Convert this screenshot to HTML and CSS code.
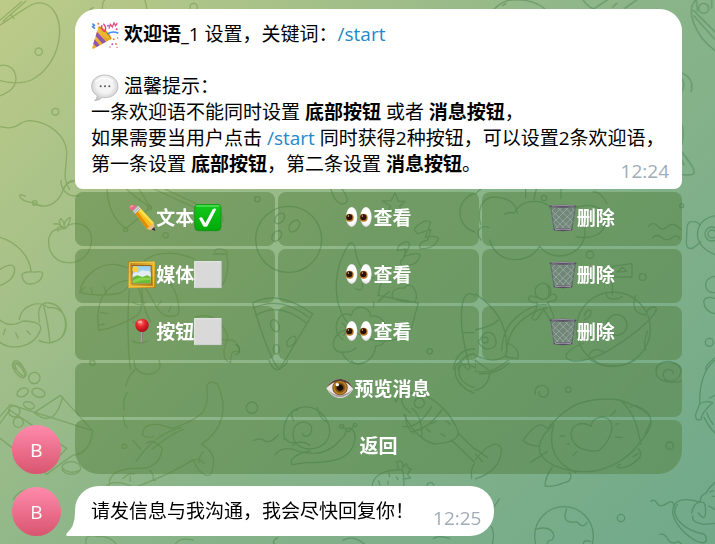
FILE: index.html
```html
<!DOCTYPE html>
<html lang="zh-CN">
<head>
<meta charset="utf-8">
<meta name="viewport" content="width=device-width, initial-scale=1">
<title>欢迎语设置</title>
<link rel="stylesheet" href="styles.css">
</head>
<body>
<svg class="sprite" aria-hidden="true">
  <defs>
    <linearGradient id="gold" x1="0" y1="0" x2="1" y2="1"><stop offset="0" stop-color="#ffd34a"/><stop offset="1" stop-color="#d88b10"/></linearGradient>
    <linearGradient id="frame" x1="0" y1="0" x2="1" y2="1"><stop offset="0" stop-color="#b97a12"/><stop offset=".5" stop-color="#e5b52c"/><stop offset="1" stop-color="#b27a14"/></linearGradient>
    <linearGradient id="sky" x1="0" y1="0" x2="0" y2="1"><stop offset="0" stop-color="#8fcdf0"/><stop offset="1" stop-color="#e4f3f7"/></linearGradient>
    <linearGradient id="lime" x1="0" y1="0" x2="0" y2="1"><stop offset="0" stop-color="#14c91c"/><stop offset="1" stop-color="#02a909"/></linearGradient>
    <radialGradient id="talk" cx=".5" cy=".4" r=".6"><stop offset=".5" stop-color="#f4f4f4"/><stop offset="1" stop-color="#c4c4c4"/></radialGradient>
    <radialGradient id="red" cx=".4" cy=".3" r=".7"><stop offset="0" stop-color="#ff8078"/><stop offset=".45" stop-color="#e3282c"/><stop offset="1" stop-color="#a90c18"/></radialGradient>
    <radialGradient id="white" cx=".5" cy=".45" r=".6"><stop offset=".65" stop-color="#fff"/><stop offset="1" stop-color="#cfc8cf"/></radialGradient>
    <radialGradient id="iris"><stop offset=".35" stop-color="#1c0c06"/><stop offset=".42" stop-color="#5b3108"/><stop offset=".8" stop-color="#c08a25"/><stop offset="1" stop-color="#5a3a12"/></radialGradient>
  </defs>
  <symbol id="party" viewBox="0 0 84 84">
    <path d="M22 14 61 50 8 80Q2 82 4 76Z" fill="url(#gold)"/>
    <path d="M18 29 45 59 35 65 14 42ZM11 52 26 70 17 75 7 65Z" fill="#8d55ad"/>
    <ellipse cx="42" cy="33" rx="8" ry="27" transform="rotate(-45 42 33)" fill="#eeb52d"/>
    <path d="M23 15Q35 19 46 31T60 51" fill="none" stroke="#b77718" stroke-width="3"/>
    <path d="M40 30Q49 16 37 5M40 29Q29 23 33 9" fill="none" stroke="#e73c72" stroke-width="4"/>
    <path d="M49 36Q65 25 82 34M4 5 10 10 5 14 12 20" fill="none" stroke="#468de8" stroke-width="5"/>
    <path d="m54 20 4-13 6 8 5-12 5 8 5-8" fill="none" stroke="#e84a81" stroke-width="4"/>
    <g fill="#ee7d3d"><circle cx="22" cy="5" r="3"/><circle cx="68" cy="52" r="3"/><circle cx="75" cy="66" r="3"/></g>
    <g fill="#a25bc5"><circle cx="51" cy="11" r="3"/><circle cx="64" cy="67" r="3"/><circle cx="80" cy="48" r="2"/></g>
    <g fill="#e74380"><circle cx="77" cy="22" r="3"/><circle cx="78" cy="76" r="2"/><circle cx="57" cy="75" r="2"/></g>
  </symbol>
  <symbol id="speech" viewBox="0 0 84 84">
    <path d="M41 3C18 3 2 17 2 37c0 13 6 22 17 28q-1 10-8 15 14 0 22-10 4 1 9 1c23 0 39-14 39-34S64 3 41 3Z" fill="url(#talk)" stroke="#aaa" stroke-width="2"/>
    <path d="M13 24Q30 3 65 20" fill="none" stroke="#fff" stroke-width="4" opacity=".8"/>
    <g fill="#555"><circle cx="29" cy="37" r="3"/><circle cx="42" cy="37" r="3"/><circle cx="55" cy="37" r="3"/></g>
  </symbol>
  <symbol id="pencil" viewBox="0 0 84 84">
    <path d="m18 23 15-15 44 48 4 24-24-5Z" fill="#ffbf19"/>
    <path d="m18 23 6-6 39 51-6 7Z" fill="#e28c0b"/>
    <path d="m27 14 6-6 44 48-5 5Z" fill="#ffe04a"/>
    <path d="m57 75 8-8 4-1 2-5 6-5 4 24Z" fill="#e8bd88"/><path d="m70 77 9-9 3 13Z" fill="#28334a"/>
    <path d="m12 20 16-16 10 11-16 15Z" fill="#a9afb4"/><path d="m17 23 16-16M20 27 36 12" stroke="#e8edf0" stroke-width="3"/>
    <path d="M13 22 3 13Q3 1 17 2l10 5Z" fill="#e66f7d"/><path d="m6 9 9-4" stroke="#f9a4aa" stroke-width="4"/>
  </symbol>
  <symbol id="check" viewBox="0 0 84 84">
    <rect x="2" y="1" width="79" height="79" rx="12" fill="url(#lime)" stroke="#078b0c" stroke-width="2"/>
    <path d="M8 6h66" stroke="#52df57" stroke-width="4" stroke-linecap="round"/>
    <path d="M15 43q5-5 10-2l9 16L56 16q5-4 11-1L40 67q-7 3-12 0Z" fill="#fff"/>
  </symbol>
  <symbol id="picture" viewBox="0 0 84 84">
    <path d="M1 1h80v80H1Z" fill="url(#frame)"/><path d="M5 5h72v72H5Z" fill="none" stroke="#f0cb4c" stroke-width="3"/>
    <path d="M11 12h60v58H11Z" fill="#976118"/><path d="M14 15h54v52H14Z" fill="url(#sky)"/>
    <circle cx="22" cy="25" r="9" fill="#ffd12f"/><path d="M14 39q9-9 17-3 11-14 21-5 10-5 16 4v17H14Z" fill="#e1edf2"/>
    <path d="m14 49 14-6 15 5 15-5 10 5v19H14Z" fill="#68bd36"/><path d="M14 59q20-13 54-8v6q-25-2-54 10Z" fill="#8ad34d"/>
  </symbol>
  <symbol id="square" viewBox="0 0 84 84"><path d="M1 1h81v80H1Z" fill="#d9d9d9"/><path d="M1 2h81M2 2v79" stroke="#e8e8e8" stroke-width="3"/><path d="M1 80h81V1" fill="none" stroke="#c8c8c8" stroke-width="2"/></symbol>
  <symbol id="pin" viewBox="0 0 84 84">
    <path d="M38 38h8l-2 36-3 3-1-3Z" fill="#81777b"/><path d="M41 38v35" stroke="#c9c2c5" stroke-width="2"/>
    <circle cx="42" cy="22" r="20" fill="url(#red)"/><ellipse cx="36" cy="12" rx="7" ry="4" fill="#ffaca6" opacity=".8"/>
  </symbol>
  <symbol id="eyes" viewBox="0 0 84 84">
    <g fill="url(#white)"><ellipse cx="20" cy="39" rx="17" ry="30"/><ellipse cx="63" cy="39" rx="17" ry="30"/></g>
    <g fill="#b77622"><circle cx="14" cy="41" r="12"/><circle cx="56" cy="41" r="12"/></g>
    <g fill="#2b1108"><circle cx="13" cy="40" r="9"/><circle cx="55" cy="40" r="9"/></g>
    <g fill="#f6d9bb"><circle cx="10" cy="36" r="2"/><circle cx="52" cy="36" r="2"/></g>
  </symbol>
  <symbol id="bin" viewBox="0 0 84 84">
    <path d="M4 6h76l-11 73q-27 4-54 0Z" fill="#73827d" opacity=".75"/>
    <path d="m6 17 61 59M8 34l42 44M10 51l22 27M23 8l52 49M44 8l33 30M65 8l13 13M77 17 17 76M75 34 34 78M72 51 51 78M61 8 12 57M41 8 9 39M22 8 7 22" fill="none" stroke="#a8b1af" stroke-width="2"/>
    <path d="M5 8 15 76M79 8 69 76" stroke="#626d70" stroke-width="3"/>
    <path d="M2 5q40-5 80 0v4q-40 4-80 0ZM14 75q28-4 56 0v4q-28 5-56 0Z" fill="#574d61"/><path d="M8 6q34-3 68 0M18 77q24-3 48 0" fill="none" stroke="#c0bbcc" stroke-width="2"/>
  </symbol>
  <symbol id="eye" viewBox="0 0 84 84">
    <path d="M1 40Q18 10 46 12q24 2 36 31Q63 72 38 69 16 66 1 40Z" fill="#efe6e8"/>
    <path d="M5 42Q20 66 40 67q24 1 40-24Q63 58 41 61 21 60 5 42Z" fill="#aaa0a5"/>
    <circle cx="42" cy="38" r="23" fill="url(#iris)"/><circle cx="34" cy="29" r="5" fill="#fff"/>
    <path d="M1 40Q18 10 46 12q24 2 36 31Q66 19 42 18 19 19 1 40Z" fill="#593d39"/>
  </symbol>
</svg>

<svg class="wallpaper" viewBox="0 0 715 544" preserveAspectRatio="xMinYMin slice" aria-hidden="true">
  <g class="doodle warm">
    <svg width="240" height="190" viewBox="0 0 720 570">
      <path d="M0 75C52 42 86 14 107 10c46-9 73 37 72 88-3 69-43 122-85 142C66 252 24 250 0 242M0 60 65 5M9 64 78 3M32 44l10 12M0 197c26-7 47 11 48 40-1 25-18 38-48 51M0 380c56 14 55-19 91-18 57 4 107 45 109 94 1 49-16 76 9 114M190 570q12-35 43-26"/>
      <circle cx="116" cy="155" r="11"/><circle cx="166" cy="335" r="10"/>
      <path d="M307 28Q307 5 314 0M441 28 435 0M270 28l10-5"/><circle cx="581" cy="21" r="11"/>
    </svg>
    <svg y="180" width="240" height="190" viewBox="0 0 720 570">
      <path d="M76 49C45 31 60 70 98 67c40 27 77 0 89-31 5-22 21-31 34-31M183 0c-1 30 20 52 53 47"/><circle cx="104" cy="69" r="7"/>
      <path d="M183 149c-52-13-53 98 21 99 77 6 98-113 28-117-20-2-32 6-41 16M162 132q16-4 29 13-24-10-17 9M185 145q-12-24-2-29 13 10 8 30M192 146q0-29 19-34-1 19-15 34"/>
      <path d="M0 172c53 15 91 61 93 103 11 5 29-6 35 4-1 25-24 36-46 32-9-3-17-16-16-28 8-8 19-7 27-8M0 268q32-20 42-8c6 18-3 43-42 56"/>
      <path d="M58 419c5-45 62-60 87-36 62-9 73 86 20 101-15 9-40 2-48-3M119 426c-8-35 0-61 29-57 43 5 62 65 37 102M130 374q14 52 20 113M0 420q28 25 69 3c37 1 58 8 52 27-20 58-95 60-121 37M16 447l-6 17M47 459l7 15M80 453l11 10"/>
      <path d="M321 27q4 80 56 119 35-27 74-65-35-20-72-54M451 81 417 27M462 27l153 70M495 27l140 66M639 115q30-34 30 10"/><circle cx="377" cy="149" r="6"/><circle cx="449" cy="83" r="6"/><circle cx="497" cy="166" r="8"/>
      <path d="M239 337c10-54 63-90 113-83l52 16q-8 50-42 69-72 13-123-2ZM413 270c30-60 103-59 169-34M403 274c74-23 144 52 132 129q-38 20-65-20-21-44-67-109M296 451c-10-81 10-145 107-153q40 70 9 109-65 38-116 44M388 330q-10 130 3 240M426 315q-3 60 25 110M398 367q27 15 38 0M398 424q30 15 42 0M396 482q25 15 48 0M240 337l14-15M277 343l-4-20M320 341l-8-21M471 379l14-16M506 395l7-16M295 437l17-5M303 397l20 4"/>
      <path d="M643 215c9-17 42-8 38 13 7 41-3 99-35 91-18-18 3-50-2-76M640 222h39M586 411c55-20 95 33 98 69 25-3 32 18 34 36-24-9-26 8-26 32-30-6-21-48-9-68-31 2-60-30-75-63"/>
      <circle cx="277" cy="549" r="7"/><ellipse cx="56" cy="562" rx="12" ry="23" transform="rotate(-35 56 562)"/>
    </svg>
    <svg y="360" width="240" height="184" viewBox="0 0 720 552">
      <ellipse cx="56" cy="31" rx="11" ry="27" transform="rotate(-38 56 31)"/><ellipse cx="62" cy="29" rx="10" ry="24" transform="rotate(-38 62 29)"/><circle cx="103" cy="54" r="17"/><ellipse cx="68" cy="97" rx="18" ry="12" transform="rotate(-28 68 97)"/><ellipse cx="115" cy="98" rx="20" ry="13" transform="rotate(18 115 98)"/><ellipse cx="87" cy="136" rx="17" ry="10" transform="rotate(20 87 136)"/><circle cx="43" cy="154" r="17"/><circle cx="55" cy="187" r="15"/>
      <path d="M0 170 31 134 278 212Q272 280 218 286L140 343 0 235M0 190 29 150 200 265l-65 70M103 158 181 106 278 212M103 158q62 50 85-48"/><ellipse cx="214" cy="324" rx="28" ry="19"/><path d="M188 325q20 20 50 6M40 418q20-32 48-29"/>
      <path d="M402 0q0 42 47 43 43-12 27-43M410 25q-25 20-32 52M381 98q-15 25-8 51M370 167q1 26 12 37M398 240l23 27"/>
      <path d="M428 224q0-35 50-30l40 11q54-16 88-45 22-30 14-78 6-26 33-9c29 65 25 128-48 180q35 21 36 48-3 58-26 43-22-9-35-45-31 19-63 36-68 31-114 48-44-23-76-11c2-39 45-48 91-47 50 3 66-34 69-59q-29-32-48-16M408 304q61-87 137-101M456 268q55-46 94-60M610 275q-12 10-14 34M580 303q17-14 31 7M427 225q16 12 35 4M274 402q20-9 54-29M391 350v13M369 356q11-15 36-15M449 330q16 17 9 31h9"/><circle cx="373" cy="259" r="7"/><circle cx="277" cy="8" r="8"/>
      <path d="M258 550q-5-31 35-20 30-5 54 20M580 540q-42-9-54 12"/>
    </svg>
  </g>
  <g class="doodle cool">
    <svg x="235" y="180" width="240" height="190" viewBox="0 0 720 570">
      <circle cx="67" cy="58" r="8"/><circle cx="161" cy="178" r="99"/><ellipse cx="134" cy="115" rx="12" ry="18" transform="rotate(40 134 115)"/><ellipse cx="178" cy="138" rx="13" ry="20" transform="rotate(40 178 138)"/><ellipse cx="125" cy="168" rx="12" ry="18" transform="rotate(40 125 168)"/>
      <path d="m276 0 23 56q17 22 31 14 12-7 2-25L306 0M480 39l10 25h20l-16 15 9 22-23-12-24 12 11-23-26-15 27-1Z"/>
      <path d="M360 202q-5-20-19-9c-46 74-68 210 47 281q100 27 141-29l21-76-87-16-34-7 10-41-13-12M360 202q7 70 57 92M416 366v15M430 366q20-22 33-31M362 326q24 13 20-16M538 151q-2-10 29-27 14-4 20 3l-16 45q33-7 39 3-9 32-54 31-9-19 22-26l10-31-40 12ZM487 212q-1-19 27-27 14 1 7 18l-15 27q45-16 49-4-6 31-48 31-22-3 0-24l5-26ZM471 349q1-29 36-24c19-30 49 16 33 41q-59-1-69-17M324 479c-42-28-13-94 25-73 7-36 55-29 58 2 58-7 68 90 15 90-6 65-84 69-100 20-52-6-21-81 27-65M321 429q22 15 5 37M378 460q23-29 41-11M319 516q30 3 44-13"/>
      <path d="M53 369q76-42 180 33l-99 166q-30-24-81-199ZM55 384q84-38 164 27M62 406q72-42 151 22"/><ellipse cx="120" cy="437" rx="12" ry="19" transform="rotate(-25 120 437)"/><ellipse cx="169" cy="484" rx="10" ry="18" transform="rotate(40 169 484)"/><ellipse cx="124" cy="508" rx="9" ry="14"/><path d="M0 494q14 2 14 15T0 524"/><circle cx="584" cy="514" r="8"/><circle cx="735" cy="98" r="60"/>
      <path d="M680 440q-5-100 25-99 15 2 15 10M680 440q7 60 26 127M655 570q8-64 65-63M668 570q12-48 52-48M682 458h38"/>
    </svg>
    <svg x="475" y="180" width="240" height="190" viewBox="0 0 720 570">
      <path d="M0 42 18 27M152 27v26M177 58l7-31M258 56V27M18 180C-5 150 22 132 42 143M88 103q12-9 29-3c24-49 98-44 115-9 17-16 42-16 55-3 60-23 103-11 105 36-6 44-45 54-89 46M17 134c-12-42 3-79 36-83 50 1 68 18 75 50M45 180c14 70 114 79 149 19 47 60 151 20 134-59-3-14-7-16-15-18M354 36q23-5 42 36"/><circle cx="207" cy="54" r="8"/><circle cx="345" cy="224" r="11"/><circle cx="503" cy="291" r="10"/><circle cx="620" cy="77" r="6"/>
      <path d="M520 139q15-16 29 0t30 0 39 10M532 173q15-13 29 0t30 0 24 5M720 107q-51 11-53 58 3 38 53 59M674 135q-4-11-23-10-14 0-15 19l-2 48q3 18 20 12l23-18"/><circle cx="711" cy="162" r="21"/><circle cx="711" cy="162" r="12"/>
      <path d="M720 289c-33 5-30 28-24 41q9 9 24 8M720 355q-28-9-34 9 3 32 34 37M720 534q-29 20-28 36"/><circle cx="703" cy="487" r="12"/>
      <circle cx="204" cy="334" r="24"/><path d="M184 353q-22-13-23 5 5 13 26 9-3 27-16 46 8 17 21-4l14-20 17 27q19 8 10-16l-16-35q28 1 28-14-8-17-26 0 8-20-2-33M412 344v-85l59-8v40h-57M426 276l16-14 13 12ZM393 338q0 20 22 19 18 1 27-8"/>
      <path d="M0 341c72 47 103 111 93 185-30 25-63 12-93 0M0 450q50-10 70-30M80 511q3-71 55-108 45-34 79-28M95 520q0-70 60-110 31-23 61-26M98 489q39 17 30 47l-35-5M15 479q20-37 42-14 20 42-25 42-31-20-17-28"/><circle cx="30" cy="480" r="9"/>
      <circle cx="415" cy="447" r="111"/><circle cx="425" cy="435" r="31"/><path d="M326 489C213 533 301 578 415 502c77-47 154-118 121-121q-11-1-22 15M481 347q-16 53 31 58M518 453q-14 32-6 58M342 525q14-27 44-9M367 432q-2 27 20 45M328 408q6-22 20-16 2 19-20 27M0 570v-30l40 30"/>
      <path d="M542 570q4-25 38-24 37 5 38 24"/>
    </svg>
    <svg x="235" y="360" width="240" height="184" viewBox="0 0 720 552">
      <circle cx="51" cy="143" r="17"/><path d="M102 0q16 42 37 23 17-9 19-23M349 0q10 18 35 9"/>
      <path d="M56 242q19-11 33 0t41-17M120 284q20-24 54-16 92 35 144-31 16-11 16-30c13-10 29 8 26 29-6 57-54 72-147 72l-42 6c-14-17 23-37 55-41M322 199l19 17 16-18"/><circle cx="360" cy="195" r="5"/><circle cx="320" cy="199" r="6"/><path d="M148 239c-18-125 122-126 136-30 6 71-120 82-109 4 3-32 56-37 55-4-2 23-25 25-28 11M176 182q-18-30 12-32M246 143q13 43 34 43M151 235q10 16 28 12M172 256q24-20 52 0"/>
      <path d="M482 126c40-67 153-3 188 89q2 33-72 37c-58-17-80-69-91-88M482 126q-8-21 19-20-8 28 25 52M512 165q-3 34 24 56M531 145q31 24 30 87M504 199q46 9 86-60M527 215q50-4 93-65M670 220l50 49M649 240l69 66M590 191l15-8M633 183l13 10M618 221l13 8M574 207l12 9"/><circle cx="553" cy="129" r="15"/>
      <path d="M411 379q5-49 90-51 8 20 5 50M489 328l-3-23q21-7 17 18l10-12 8 14 8 2-12 16 10 11-22 3M431 363l4 13M461 340l3 10M459 364v9M484 351l5 8"/><circle cx="586" cy="378" r="10"/><path d="M720 0c-78-20-81 74 0 100M720 23c-61-41-67 49 0 59M674 3l25 26M710 356q-4-34 10-46M128 533q-18 9-10 19M324 541q30-17 64 11M595 536q15-12 49 0"/>
    </svg>
    <svg x="475" y="360" width="240" height="184" viewBox="0 0 720 552">
      <path d="M0 34q50 12 101-34M13 42q58-1 90-34M44 40q-4 41-44 51M347 0q60 40 135 0"/><circle cx="280" cy="89" r="8"/><circle cx="584" cy="257" r="11"/><path d="M181 103c-7-38 45-32 39-4-6 22-36 11-27-4M618 61c-2 11-82 10-74-30 8-43 84-30 72 10-11 34-55 26-51 0 6-19 31-14 30 0"/>
      <path d="M220 204q28-36 71-64 61-31 142-20 72 24 89 46c16 25-3 53-31 86-26 36-73 69-130 81-67 7-146-9-167-57-7-33 17-58 39-80M236 192q-28 104 66 145M437 122q48 40 60 131M144 242q35-52 57-47l18 11M144 242q13 14 49 17M232 321q-22 31-22 57 23 5 57-10c21-3 25-19 16-31M490 265q11 12 4 28-35 36-67 29 0-9 10-9M474 290l15-9M466 141l14-6q50 20 47 50l-17 38"/>
      <path d="M371 272q-64 5-80-36c-11-35 23-58 58-37 1-30 45-38 58-13 11 24-3 57-36 86ZM408 166l14-14M422 193l8-3M422 231l20 2M255 229l15-2M275 253l7-1M294 287l12-13M166 307l51-32M0 281l23 24M0 266l38 27M0 300q60-73 79-34c0 54-41 79-79 91"/>
      <path d="M720 0q-48 40-46 132 14-12 39-4-33 29-35 51-18 5-16-16l12-31M720 106l-17 8M687 172q16 31 33 47M696 158q4 16 18 35"/>
      <circle cx="438" cy="474" r="11"/><circle cx="267" cy="528" r="88"/><path d="M275 447c-14 36 3 42 32 39 12 20 27 8 29 1M183 508c41-13 62 11 49 31-17 3-15 8-14 20M325 552q0-14 22-8M55 444l18-27M49 500q11 18 3 52"/>
      <path d="M528 424q10-9 18 6t30 0 20 13M555 523q14-3 24 15t31 6l20 18M676 427c-105-36-109 56-18 113 44 22 40-7 29-18-62-10-105-56-80-89M650 459c7-38 35-39 40-25q8 61-20 25M676 427q-2-21 16-27 12-20 28-33M654 468q-8 17 32 25l34-3M705 396l10-4M712 409h8M702 438l18 11"/>
    </svg>
    <svg x="475" width="240" height="190" viewBox="0 0 720 570">
      <path d="M58 27Q87-3 122 0q53-2 88 27M83 17l10-7M324 0q29 37 42 20L397 0M413 22l12-12M449 25 485 0"/><path d="M720 152C659 107 631 31 662 0M720 119 656 47M655 31l65 65M667 33 664 0M710 0v25"/><circle cx="686" cy="25" r="15"/>
      <path d="M620 219q39 16 28 56M620 235q13 21 0 39M620 373q9 25 0 60M620 455c19 28 49 58 33 68q-15 4-33 0M620 481l7 14"/>
    </svg>
  </g>
</svg>

<main class="chat">
  <article class="message">
    <div class="avatar">B</div>
    <div class="content">
      <div class="bubble bubble-menu">
        <p><svg class="emoji"><use href="#party"/></svg> <strong>欢迎语_</strong>1 设置，关键词：<a href="#start">/start</a></p>
        <p class="spaced"><svg class="emoji"><use href="#speech"/></svg> 温馨提示：<br>一条欢迎语不能同时设置 <strong>底部按钮</strong> 或者 <strong>消息按钮</strong>，<br>如果需要当用户点击 <a href="#start">/start</a> 同时获得2种按钮，可以设置2条欢迎语，<br>第一条设置 <strong>底部按钮</strong>，第二条设置 <strong>消息按钮</strong>。<time>12:24</time></p>
      </div>
      <div class="keyboard">
        <button type="button"><svg class="emoji"><use href="#pencil"/></svg>文本<svg class="emoji"><use href="#check"/></svg></button>
        <button type="button"><svg class="emoji"><use href="#eyes"/></svg>查看</button>
        <button type="button"><svg class="emoji"><use href="#bin"/></svg>删除</button>
        <button type="button"><svg class="emoji"><use href="#picture"/></svg>媒体<svg class="emoji"><use href="#square"/></svg></button>
        <button type="button"><svg class="emoji"><use href="#eyes"/></svg>查看</button>
        <button type="button"><svg class="emoji"><use href="#bin"/></svg>删除</button>
        <button type="button"><svg class="emoji"><use href="#pin"/></svg>按钮<svg class="emoji"><use href="#square"/></svg></button>
        <button type="button"><svg class="emoji"><use href="#eyes"/></svg>查看</button>
        <button type="button"><svg class="emoji"><use href="#bin"/></svg>删除</button>
        <button type="button" class="wide"><svg class="emoji"><use href="#eye"/></svg>预览消息</button>
        <button type="button" class="wide">返回</button>
      </div>
    </div>
  </article>
  <article class="message">
    <div class="avatar">B</div>
    <div class="content">
      <div class="bubble bubble-last">
        <p>请发信息与我沟通，我会尽快回复你！<time>12:25</time></p>
        <svg class="tail" viewBox="0 0 10 24" aria-hidden="true"><path d="M10 0H9Q9 15 1 21Q-1 24 2 24H10Z"/></svg>
      </div>
    </div>
  </article>
</main>
</body>
</html>
```
FILE: styles.css
```css
* {
  box-sizing: border-box;
}

body {
  margin: 0;
  min-height: 100vh;
  overflow: hidden;
  background: linear-gradient(135deg, #bdcb88 0%, #8cb589 50%, #70a98a 100%);
  color: #000;
  font-family: "Open Sans", "Noto Sans CJK SC", sans-serif;
  font-size: 19px;
  line-height: 26px;
}

.sprite {
  position: absolute;
  width: 0;
  height: 0;
}

.wallpaper {
  position: fixed;
  inset: 0;
  width: 100%;
  height: 100%;
}

.doodle {
  fill: none;
  stroke-width: 4;
  stroke-linecap: round;
  stroke-linejoin: round;
}

.warm {
  stroke: #40741c;
  opacity: 0.3;
}

.cool {
  stroke: #175b26;
  opacity: 0.3;
}

.chat {
  position: relative;
  display: flex;
  flex-direction: column;
  gap: 12px;
  padding: 9px 33px 8px 12px;
}

.message {
  display: flex;
  align-items: flex-end;
  gap: 14px;
}

.avatar {
  display: flex;
  flex: none;
  align-items: center;
  justify-content: center;
  width: 49px;
  height: 49px;
  border-radius: 50%;
  background: linear-gradient(#ff8aac, #d9556f);
  color: #fff;
}

.content {
  flex: 1;
  min-width: 0;
}

.bubble {
  position: relative;
  width: fit-content;
  padding: 12px 16px;
  background: #fff;
}

.bubble-menu {
  width: auto;
  border-radius: 22px 22px 8px 8px;
}

.bubble-last {
  border-radius: 24px 24px 24px 0;
}

.bubble p {
  margin: 0;
}

.bubble .spaced {
  margin-top: 26px;
}

.bubble a {
  color: #2488c9;
  text-decoration: none;
}

time {
  float: right;
  margin: 7px -3px 0 19px;
  color: #a0acb6;
}

.tail {
  position: absolute;
  bottom: 0;
  left: -9px;
  width: 10px;
  height: 24px;
  fill: #fff;
}

.emoji {
  flex: none;
  width: 28px;
  height: 28px;
}

.bubble .emoji {
  margin: -6px 0;
  vertical-align: -3px;
}

.keyboard {
  display: grid;
  grid-template-columns: repeat(3, 1fr);
  gap: 3px;
  margin-top: 3px;
}

.keyboard button {
  display: flex;
  align-items: center;
  justify-content: center;
  height: 54px;
  padding: 0 8px 2px;
  border: 0;
  border-radius: 8px;
  background: rgba(81, 126, 59, 0.47);
  color: #fff;
  font: inherit;
  font-weight: 700;
  cursor: pointer;
}

.keyboard .wide {
  grid-column: 1 / -1;
}

.keyboard button:last-child {
  border-radius: 8px 8px 24px 24px;
}
```
